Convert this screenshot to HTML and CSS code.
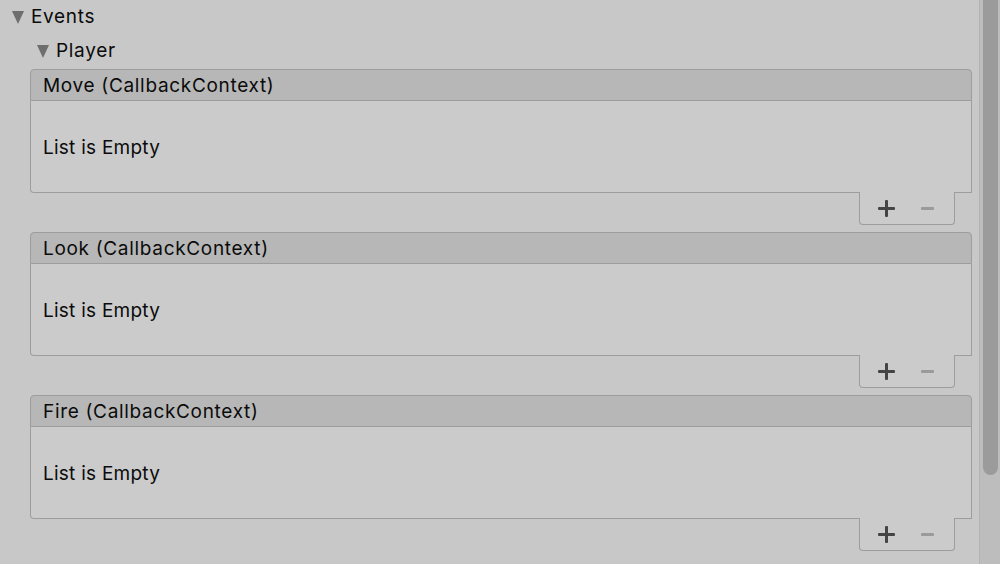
FILE: index.html
```html
<!DOCTYPE html>
<html>
<head>
<meta charset="utf-8">
<link rel="stylesheet" href="styles.css">
</head>
<body>
<div class="window">
  <div class="content">
    <div class="foldout level1"><span class="tri"></span><span class="label">Events</span></div>
    <div class="foldout level2"><span class="tri"></span><span class="label">Player</span></div>
    <div class="lists">
      <div class="event">
        <div class="ev-header">Move (CallbackContext)</div>
        <div class="ev-body">List is Empty</div>
        <div class="ev-footer"><span class="plus"></span><span class="minus"></span></div>
      </div>
      <div class="event">
        <div class="ev-header">Look (CallbackContext)</div>
        <div class="ev-body">List is Empty</div>
        <div class="ev-footer"><span class="plus"></span><span class="minus"></span></div>
      </div>
      <div class="event">
        <div class="ev-header">Fire (CallbackContext)</div>
        <div class="ev-body">List is Empty</div>
        <div class="ev-footer"><span class="plus"></span><span class="minus"></span></div>
      </div>
    </div>
  </div>
  <div class="scrollbar"><div class="thumb"></div></div>
</div>
</body>
</html>
```
FILE: styles.css
```css
html, body {
  margin: 0;
  padding: 0;
  width: 1000px;
  height: 564px;
  overflow: hidden;
  background: #c8c8c8;
  font-family: Inter, "Noto Sans", sans-serif;
  font-size: 19px;
  letter-spacing: 0.68px;
  color: #0b0b0b;
}
.window {
  display: flex;
  height: 564px;
}
.content {
  width: 979px;
  flex: none;
}
.foldout {
  height: 33px;
  display: flex;
  align-items: center;
}
.level1 { padding-left: 12px; }
.level2 { padding-left: 37px; padding-top: 2px; height: 31px; }
.tri {
  width: 0;
  height: 0;
  border-left: 6.5px solid transparent;
  border-right: 6.5px solid transparent;
  border-top: 13px solid #6e6e6e;
  margin-right: 7px;
  margin-top: 1px;
}
.label { line-height: 1; }
.lists {
  margin: 3px 0 0 30px;
  width: 942px;
  display: flex;
  flex-direction: column;
  gap: 7px;
}
.event {
  display: flex;
  flex-direction: column;
}
.ev-header {
  border: 1px solid #9d9d9d;
  border-radius: 4px 4px 0 0;
  background: #b7b7b7;
  padding-left: 12px;
  display: flex;
  align-items: center;
  padding-top: 1px;
  height: 29px;
}
.ev-body {
  height: 89px;
  border: 1px solid #9d9d9d;
  border-top: none;
  border-radius: 0 0 0 4px;
  background: #cbcbcb;
  padding-left: 12px;
  display: flex;
  align-items: center;
  padding-top: 2px;
  letter-spacing: 0.25px;
}
.ev-footer {
  align-self: flex-end;
  margin-right: 17px;
  margin-top: -1px;
  width: 94px;
  height: 32px;
  border: 1px solid #9d9d9d;
  border-top: none;
  border-radius: 0 0 4px 4px;
  background: #cbcbcb;
  display: flex;
  align-items: center;
  position: relative;
}
.plus {
  position: relative;
  width: 17px;
  height: 17px;
  margin-left: 18px;
}
.plus::before, .plus::after {
  content: "";
  position: absolute;
  background: #444444;
  border-radius: 1px;
}
.plus::before { left: 0; top: 7px; width: 17px; height: 3px; }
.plus::after { left: 7px; top: 0; width: 3px; height: 17px; }
.minus {
  width: 13px;
  height: 3px;
  background: #9a9a9a;
  border-radius: 1px;
  margin-left: 26px;
}
.scrollbar {
  flex: 1;
  border-left: 1px solid #b3b3b3;
  background: #bdbdbd;
  padding-left: 3px;
  padding-right: 2px;
}
.thumb {
  height: 475px;
  background: #9b9b9b;
  border-radius: 0 0 8px 8px;
}
```
